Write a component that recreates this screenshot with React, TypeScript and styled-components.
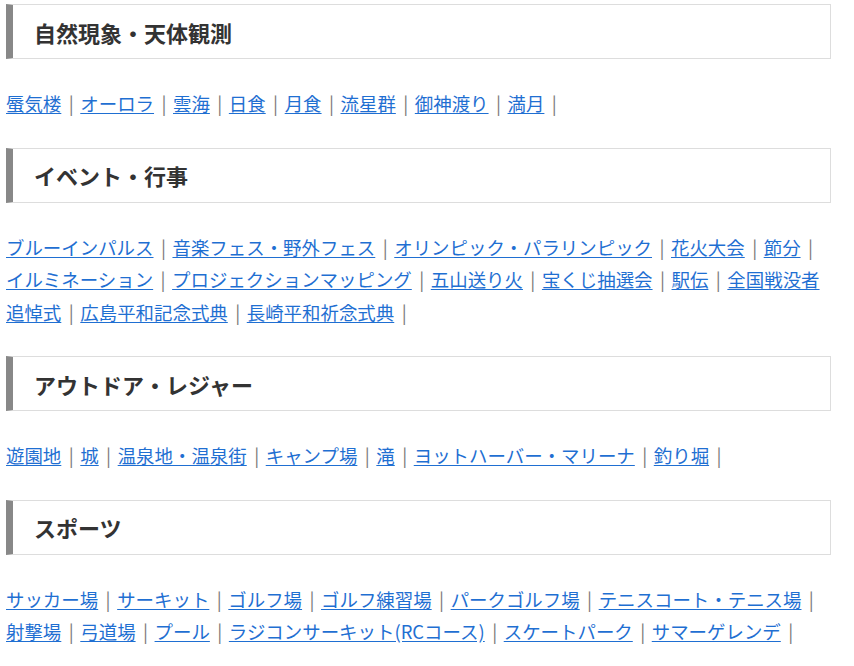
import React from "react";
import styled, { createGlobalStyle } from "styled-components";

const GlobalStyle = createGlobalStyle`
  body {
    margin: 0;
    background: #ffffff;
    font-family: "Noto Sans CJK JP", "Noto Sans", sans-serif;
  }
`;

const Page = styled.div`
  width: 825px;
  padding: 4px 0 0 6px;
`;

const Heading = styled.h2`
  margin: 0;
  height: 53px;
  display: flex;
  align-items: center;
  padding-left: 21px;
  border: 1px solid #dddddd;
  border-left: 7px solid #888888;
  font-size: 22px;
  font-weight: 700;
  color: #333333;
`;

const LinkList = styled.p`
  margin: 28px 0 28px;
  font-size: 18.45px;
  line-height: 32.5px;
`;

const Link = styled.a`
  color: #1f6fd2;
  text-decoration: underline;
  text-underline-offset: 2px;
`;

const Sep = styled.span`
  padding: 0 6.6px 0 7.4px;
  color: #7a7a7a;
`;

type Section = { title: string; items: string[] };

const sections: Section[] = [
  {
    title: "自然現象・天体観測",
    items: ["蜃気楼", "オーロラ", "雲海", "日食", "月食", "流星群", "御神渡り", "満月"],
  },
  {
    title: "イベント・行事",
    items: [
      "ブルーインパルス",
      "音楽フェス・野外フェス",
      "オリンピック・パラリンピック",
      "花火大会",
      "節分",
      "イルミネーション",
      "プロジェクションマッピング",
      "五山送り火",
      "宝くじ抽選会",
      "駅伝",
      "全国戦没者追悼式",
      "広島平和記念式典",
      "長崎平和祈念式典",
    ],
  },
  {
    title: "アウトドア・レジャー",
    items: ["遊園地", "城", "温泉地・温泉街", "キャンプ場", "滝", "ヨットハーバー・マリーナ", "釣り堀"],
  },
  {
    title: "スポーツ",
    items: [
      "サッカー場",
      "サーキット",
      "ゴルフ場",
      "ゴルフ練習場",
      "パークゴルフ場",
      "テニスコート・テニス場",
      "射撃場",
      "弓道場",
      "プール",
      "ラジコンサーキット(RCコース)",
      "スケートパーク",
      "サマーゲレンデ",
    ],
  },
];

const App: React.FC = () => {
  return (
    <Page>
      <GlobalStyle />
      {sections.map((s) => (
        <section key={s.title}>
          <Heading>{s.title}</Heading>
          <LinkList>
            {s.items.map((item) => (
              <React.Fragment key={item}>
                <Link href="#">{item}</Link>
                <Sep>|</Sep>
              </React.Fragment>
            ))}
          </LinkList>
        </section>
      ))}
    </Page>
  );
};

export default App;
